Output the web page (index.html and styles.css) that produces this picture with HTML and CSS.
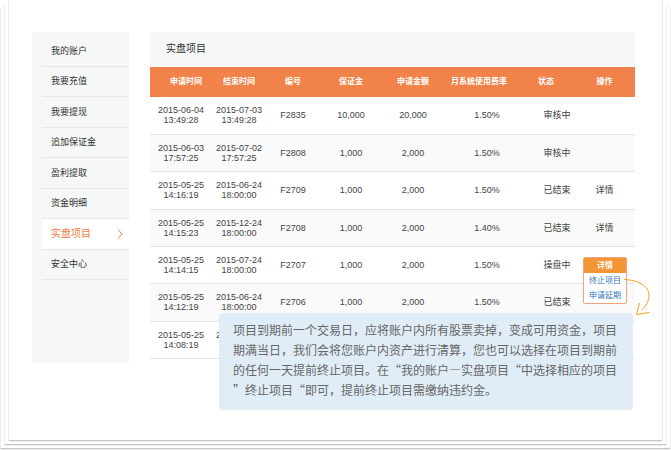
FILE: index.html
```html
<!DOCTYPE html>
<html lang="zh-CN">
<head>
<meta charset="utf-8">
<title>实盘项目</title>
<link rel="stylesheet" href="styles.css">
</head>
<body>
<div class="sheet sheet-back">
<div class="sheet sheet-mid">
<div class="sheet sheet-front">
  <nav class="sidebar">
    <ul class="menu">
      <li><a href="#">我的账户</a></li>
      <li><a href="#">我要充值</a></li>
      <li><a href="#">我要提现</a></li>
      <li><a href="#">追加保证金</a></li>
      <li><a href="#">盈利提取</a></li>
      <li><a href="#">资金明细</a></li>
      <li class="active"><a href="#">实盘项目<svg class="chevron" viewBox="0 0 6 10"><path d="M1 0.5L5 5L1 9.5"/></svg></a></li>
      <li><a href="#">安全中心</a></li>
    </ul>
  </nav>
  <main class="content">
    <h1 class="title">实盘项目</h1>
    <table class="projects">
      <colgroup>
        <col class="w-date"><col class="w-short"><col class="w-short"><col class="w-date"><col class="w-date"><col class="w-rate"><col class="w-short"><col class="w-action">
      </colgroup>
      <thead>
        <tr><th class="first">申请时间</th><th>结束时间</th><th>编号</th><th>保证金</th><th>申请金额</th><th class="rate">月系统使用费率</th><th class="state">状态</th><th class="action">操作</th></tr>
      </thead>
      <tbody>
        <tr><td>2015-06-04<br>13:49:28</td><td>2015-07-03<br>13:49:28</td><td>F2835</td><td>10,000</td><td>20,000</td><td>1.50%</td><td>审核中</td><td class="action"></td></tr>
        <tr><td>2015-06-03<br>17:57:25</td><td>2015-07-02<br>17:57:25</td><td>F2808</td><td>1,000</td><td>2,000</td><td>1.50%</td><td>审核中</td><td class="action"></td></tr>
        <tr><td>2015-05-25<br>14:16:19</td><td>2015-06-24<br>18:00:00</td><td>F2709</td><td>1,000</td><td>2,000</td><td>1.50%</td><td>已结束</td><td class="action"><a href="#">详情</a></td></tr>
        <tr><td>2015-05-25<br>14:15:23</td><td>2015-12-24<br>18:00:00</td><td>F2708</td><td>1,000</td><td>2,000</td><td>1.40%</td><td>已结束</td><td class="action"><a href="#">详情</a></td></tr>
        <tr><td>2015-05-25<br>14:14:15</td><td>2015-07-24<br>18:00:00</td><td>F2707</td><td>1,000</td><td>2,000</td><td>1.50%</td><td>操盘中</td>
          <td class="action">
            <div class="dropdown">
              <button type="button">详情</button>
              <a href="#">终止项目</a>
              <a href="#">申请延期</a>
              <svg class="arrow" viewBox="0 0 30 40"><path d="M1 3.5C15 4 26 10 26 19C26 25 23 30 19 34M16.500 27L13.500 38.500L26.500 36.500"/></svg>
            </div>
          </td></tr>
        <tr><td>2015-05-25<br>14:12:19</td><td>2015-06-24<br>18:00:00</td><td>F2706</td><td>1,000</td><td>2,000</td><td>1.50%</td><td>已结束</td><td class="action"></td></tr>
        <tr><td>2015-05-25<br>14:08:19</td><td class="clipped">2</td><td></td><td></td><td></td><td></td><td></td><td class="action"></td></tr>
      </tbody>
    </table>
    <p class="note" role="tooltip">项目到期前一个交易日，应将账户内所有股票卖掉，变成可用资金，项目<br>期满当日，我们会将您账户内资产进行清算，您也可以选择在项目到期前<br>的任何一天提前终止项目。在“我的账户—实盘项目“中选择相应的项目<br>”终止项目“即可，提前终止项目需缴纳违约金。</p>
  </main>
</div>
</div>
</div>
</body>
</html>
```
FILE: styles.css
```css
* {
  box-sizing: border-box;
}

body {
  margin: 0;
  min-height: 100vh;
  padding: 8px 0 1px;
  display: flex;
  flex-direction: column;
  background: #fff;
  color: #444;
  font: 9px/10px "Liberation Sans", "Noto Sans CJK SC", sans-serif;
}

a {
  color: inherit;
  text-decoration: none;
}

.sheet {
  flex: 1;
  display: flex;
  flex-direction: column;
  background: #fff;
  border: 1px solid #ececec;
  border-top: 0;
  border-bottom-color: #c6c6c6;
  border-radius: 0 0 2px 2px;
  box-shadow: 0 1px 1px #eee;
}

.sheet-back {
  padding: 0 3px 3px;
}

.sheet-mid {
  margin-top: -4px;
  padding: 0 3px 3px;
}

.sheet-front {
  margin-top: -4px;
  flex-direction: row;
  align-items: flex-start;
  gap: 21px;
  padding: 32px 27px 30px 23px;
}

.sidebar {
  flex: 0 0 97px;
  min-height: 331px;
  padding: 4px 0 0 10px;
  background: #f6f8f8;
}

.menu {
  height: 244px;
  margin: 0;
  padding: 0;
  display: flex;
  flex-direction: column;
  list-style: none;
  color: #333;
}

.menu li {
  flex: 1;
  display: flex;
  border-bottom: 1px solid #e6e6e6;
}

.menu a {
  flex: 1;
  display: flex;
  align-items: center;
  justify-content: space-between;
  padding: 0 6px 0 9px;
}

.menu .active {
  background: #fff;
  color: #f27c45;
  font-size: 10px;
}

.chevron {
  width: 6px;
  height: 10px;
  fill: none;
  stroke: #f27c45;
}

.content {
  flex: 1;
  position: relative;
}

.title {
  margin: 0 0 1px;
  padding: 7px 16px;
  background: #f6f8f8;
  color: #333;
  font-size: 10px;
  font-weight: 400;
  line-height: 20px;
}

.projects {
  width: 100%;
  height: 292px;
  table-layout: fixed;
  border-collapse: collapse;
  text-align: center;
}

.w-date {
  width: 62px;
}

.w-short {
  width: 54px;
}

.w-rate {
  width: 86px;
}

.w-action {
  width: 51px;
}

.projects th {
  height: 30px;
  padding: 0;
  background: #f0824a;
  color: #fff;
  font-size: 8px;
  white-space: nowrap;
}

.projects td {
  height: 37px;
  padding: 0;
  border-bottom: 1px solid #e4e4e4;
}

.projects tbody tr:nth-child(even) {
  background: #fafafa;
}

.projects .first {
  padding-left: 10px;
}

.projects .rate {
  padding-right: 16px;
}

.projects .state {
  padding-right: 22px;
}

.projects .action {
  position: relative;
  padding-right: 10px;
}

.projects .clipped {
  padding: 0 0 10px 4px;
  text-align: left;
}

.dropdown {
  position: absolute;
  top: 10px;
  right: 8px;
  width: 44px;
  z-index: 2;
  display: flex;
  flex-direction: column;
  background: #fff;
  border: 1px solid #f2a27c;
  border-radius: 2px;
  color: #2f78c0;
  font-size: 8px;
  line-height: 15px;
}

.dropdown button {
  padding: 0;
  border: 0;
  background: #f39534;
  color: #fff;
  font: inherit;
  font-weight: 700;
}

.arrow {
  position: absolute;
  top: 18px;
  left: 39px;
  width: 30px;
  height: 40px;
  fill: none;
  stroke: #f5a01c;
}

.note {
  position: absolute;
  top: 281px;
  right: 2px;
  z-index: 1;
  margin: 0;
  padding: 7px 16px 10px 14px;
  background: #e1edf6;
  border-radius: 4px;
  color: #666;
  font: 12px/20px "Noto Sans CJK SC", sans-serif;
  white-space: nowrap;
}
```
